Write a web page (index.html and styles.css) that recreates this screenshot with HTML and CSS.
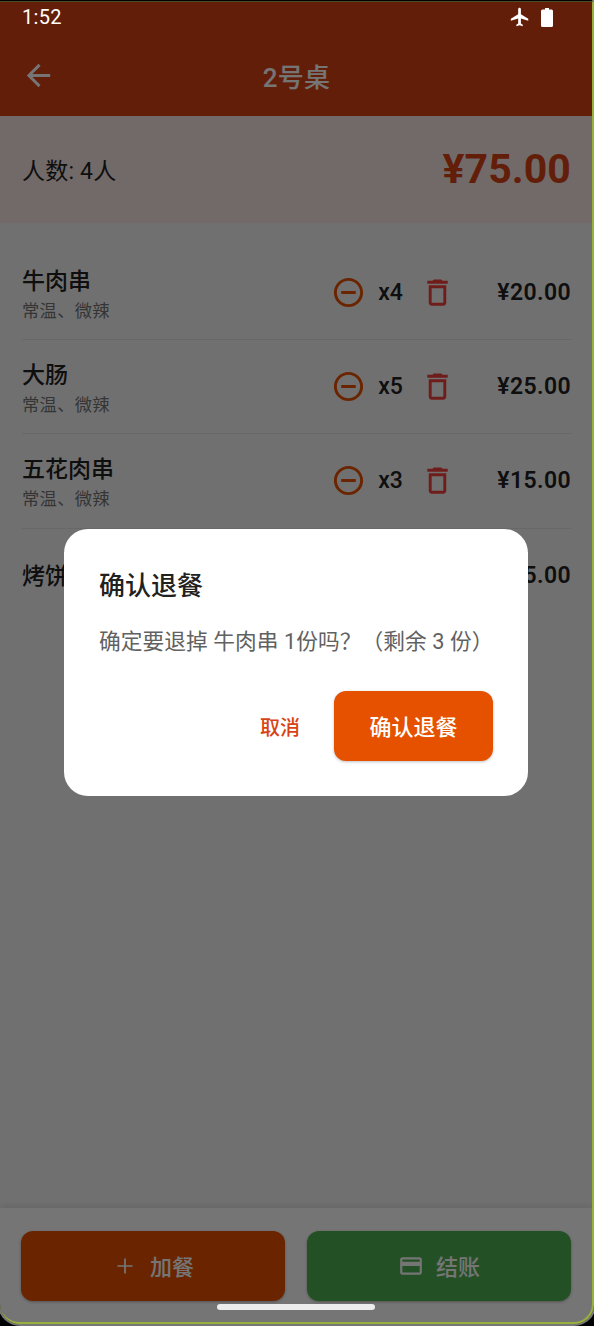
FILE: index.html
```html
<!DOCTYPE html>
<html lang="zh-CN">
<head>
<meta charset="utf-8">
<title>2号桌</title>
<link rel="stylesheet" href="styles.css">
</head>
<body>
<svg class="defs" width="0" height="0" aria-hidden="true">
  <symbol id="minus" viewBox="0 0 24 24"><path d="M7 11v2h10v-2H7zm5-9C6.48 2 2 6.48 2 12s4.48 10 10 10 10-4.48 10-10S17.52 2 12 2zm0 18c-4.41 0-8-3.59-8-8s3.59-8 8-8 8 3.59 8 8-3.59 8-8 8z"/></symbol>
  <symbol id="trash" viewBox="0 0 24 24"><path d="M6 19c0 1.100.9 2 2 2h8c1.100 0 2-.9 2-2V7H6v12zM8 9h8v10H8V9zm7.500-5l-1-1h-5l-1 1H5v2h14V4h-3.500z"/></symbol>
</svg>
<div class="screen">
  <header class="header">
    <svg class="back" viewBox="0 0 24 24"><path d="M20 11H7.830l5.590-5.590L12 4l-8 8 8 8 1.410-1.410L7.830 13H20v-2z"/></svg>
    <h1 class="title">2号桌</h1>
  </header>
  <section class="summary">
    <span class="people">人数: 4人</span>
    <span class="total">¥75.00</span>
  </section>
  <main class="list">
    <div class="item">
      <div class="info"><div class="name">牛肉串</div><div class="note">常温、微辣</div></div>
      <svg class="minus"><use href="#minus"/></svg><span class="qty">x4</span><svg class="trash"><use href="#trash"/></svg>
      <span class="price">¥20.00</span>
    </div>
    <div class="item">
      <div class="info"><div class="name">大肠</div><div class="note">常温、微辣</div></div>
      <svg class="minus"><use href="#minus"/></svg><span class="qty">x5</span><svg class="trash"><use href="#trash"/></svg>
      <span class="price">¥25.00</span>
    </div>
    <div class="item">
      <div class="info"><div class="name">五花肉串</div><div class="note">常温、微辣</div></div>
      <svg class="minus"><use href="#minus"/></svg><span class="qty">x3</span><svg class="trash"><use href="#trash"/></svg>
      <span class="price">¥15.00</span>
    </div>
    <div class="item">
      <div class="info"><div class="name">烤饼</div></div>
      <span class="price">¥15.00</span>
    </div>
  </main>
  <footer class="actions">
    <button class="btn add"><svg class="btn-icon" viewBox="0 0 24 24"><path d="M19 12.800h-6.200V19h-1.600v-6.200H5v-1.600h6.200V5h1.600v6.200H19z"/></svg><span class="btn-label">加餐</span></button>
    <button class="btn pay"><svg class="btn-icon" viewBox="0 0 24 24"><path d="M20 4H4c-1.110 0-1.990.89-1.990 2L2 18c0 1.110.89 2 2 2h16c1.110 0 2-.89 2-2V6c0-1.110-.89-2-2-2zm0 14H4v-6h16v6zm0-10H4V6h16v2z"/></svg><span class="btn-label">结账</span></button>
  </footer>
</div>
<div class="overlay">
  <div class="dialog">
    <h2 class="dialog-title">确认退餐</h2>
    <p class="dialog-text">确定要退掉 牛肉串 1份吗？（剩余 3 份）</p>
    <div class="dialog-actions">
      <button class="cancel">取消</button>
      <button class="confirm">确认退餐</button>
    </div>
  </div>
</div>
<div class="status">
  <span class="clock">1:52</span>
  <svg class="plane" viewBox="0 0 24 24"><path d="M21 16v-2l-8-5V3.500c0-.83-.67-1.500-1.500-1.500S10 2.670 10 3.500V9l-8 5v2l8-2.500V19l-2 1.500V22l3.500-1 3.500 1v-1.500L13 19v-5.500l8 2.500z"/></svg>
  <svg class="battery" viewBox="0 0 12 19"><path d="M4 0h4v1.500h2.500Q12 1.500 12 3v14.500Q12 19 10.500 19h-9Q0 19 0 17.500V3Q0 1.500 1.500 1.500H4z"/></svg>
</div>
<div class="pill"></div>
<div class="frame"></div>
</body>
</html>
```
FILE: styles.css
```css
* { box-sizing: border-box; }
body {
  margin: 0;
  width: 594px;
  height: 1326px;
  position: relative;
  overflow: hidden;
  background: #000;
  color: #212121;
  font-family: Roboto, "Noto Sans CJK SC", sans-serif;
}
h1, h2, p { margin: 0; font-weight: 500; }
button { border: 0; padding: 0; background: none; font: inherit; }
svg { flex: none; display: block; fill: currentColor; }
.defs { position: absolute; }
.screen {
  height: 1326px;
  display: flex;
  flex-direction: column;
  background: #f5f5f5;
}
.header {
  height: 116px;
  padding: 40px 22px 0 21px;
  display: grid;
  grid-template-columns: 34px 1fr 34px;
  align-items: center;
  background: #d84315;
  color: #fff;
}
.back { width: 35px; height: 35px; margin-top: -5px; }
.title { text-align: center; font-size: 26px; line-height: 36px; letter-spacing: 0.3px; }
.summary {
  height: 107px;
  padding: 0 23px 2px 22px;
  display: flex;
  align-items: center;
  justify-content: space-between;
  background: #f6e8e4;
}
.people { font-size: 23px; letter-spacing: 0.2px; }
.total { font-size: 41px; font-weight: 700; letter-spacing: 0.1px; color: #d84315; }
.list { flex: 1; padding: 23px 22px 0; }
.item {
  height: 94.200px;
  display: flex;
  align-items: center;
  border-bottom: 1.500px solid #e2e2e2;
}
.item:last-child { border-bottom-color: transparent; }
.info { flex: 1; padding-top: 4px; }
.name { font-size: 23px; line-height: 34px; font-weight: 500; }
.note { font-size: 17.300px; line-height: 25px; letter-spacing: 0.3px; color: #757575; }
.minus { width: 35px; height: 35px; color: #e65100; }
.qty { width: 49px; text-align: center; font-size: 23px; font-weight: 500; }
.trash { width: 35px; height: 35px; margin-left: 5px; color: #f0403c; }
.price { width: 117px; padding-right: 1px; text-align: right; font-size: 23px; font-weight: 600; letter-spacing: 0.4px; }
.actions {
  height: 118px;
  padding: 23px 23px 25px 21px;
  display: flex;
  gap: 22px;
  align-items: stretch;
  background: #fff;
  box-shadow: 0 -2px 8px rgba(0, 0, 0, 0.1);
}
.btn {
  flex: 1;
  display: flex;
  align-items: center;
  justify-content: center;
  gap: 12px;
  border-radius: 12px;
  color: #fff;
  font-size: 22px;
  font-weight: 500;
  box-shadow: 0 1px 3px rgba(0, 0, 0, 0.3);
}
.btn-icon { width: 26px; height: 26px; }
.btn-label { padding-bottom: 2px; }
.add { background: #e65100; }
.pay { background: #4caf50; }
.overlay {
  position: absolute;
  inset: 0;
  padding: 529px 66px 0 64px;
  background: rgba(0, 0, 0, 0.54);
}
.dialog {
  height: 266.500px;
  padding: 39px 35px 35px;
  border-radius: 24px;
  background: #fff;
}
.dialog-title { font-size: 26px; line-height: 36px; }
.dialog-text {
  margin-top: 22px;
  font-size: 21.700px;
  line-height: 32px;
  font-weight: 400;
  white-space: nowrap;
  letter-spacing: 0.07px;
  color: #616161;
}
.dialog-actions { margin-top: 33px; display: flex; justify-content: flex-end; gap: 34px; }
.cancel { font-size: 20px; font-weight: 500; color: #d84315; }
.confirm {
  width: 159px;
  height: 70px;
  padding-bottom: 2px;
  border-radius: 12px;
  background: #e65100;
  color: #fff;
  font-size: 22px;
  font-weight: 500;
  box-shadow: 0 1px 3px rgba(0, 0, 0, 0.25);
}
.status {
  position: absolute;
  inset: 0 0 auto;
  height: 34px;
  padding: 0 41px 0 22px;
  display: flex;
  align-items: center;
  color: #fff;
}
.clock { flex: 1; font-size: 20px; letter-spacing: 0.3px; }
.plane { width: 22px; height: 22px; }
.battery { width: 12px; height: 19px; margin-left: 10px; }
.pill {
  position: absolute;
  left: 217px;
  top: 1304px;
  width: 158px;
  height: 6px;
  border-radius: 3px;
  background: #ececec;
}
.frame {
  position: absolute;
  inset: 1px 0 2px;
  border: solid #98b03c;
  border-width: 1px 2px 2px 0;
  border-top-color: #4c4a28;
  border-radius: 0 0 20px 20px;
  box-shadow: 0 0 0 2px #777, 0 0 0 40px #000;
}
.frame::before {
  content: "";
  position: absolute;
  left: 0;
  right: 0;
  top: -2px;
  height: 1px;
  background: #000;
}
```
